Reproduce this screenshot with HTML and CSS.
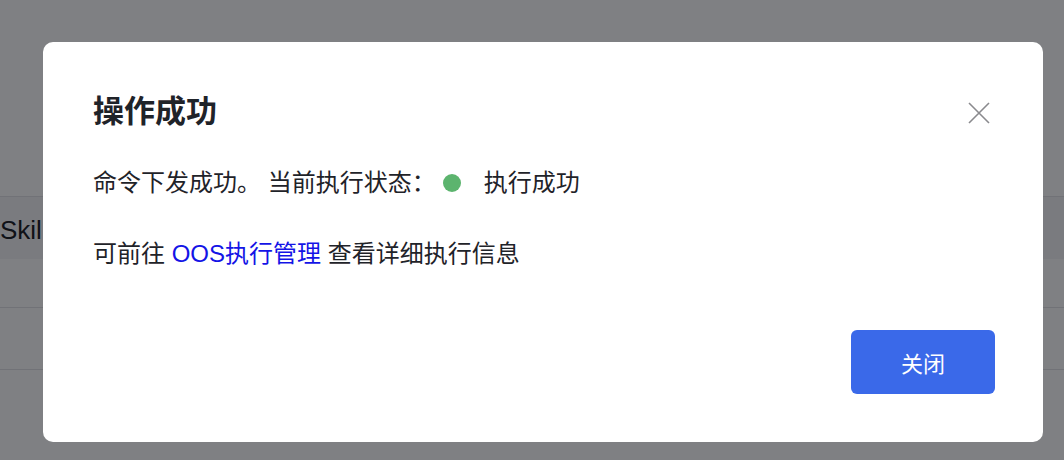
FILE: index.html
```html
<!DOCTYPE html>
<html lang="zh-CN">
<head>
    <meta charset="UTF-8">
    <meta name="viewport" content="width=device-width, initial-scale=1.0">
    <title>操作成功</title>
    <link rel="stylesheet" href="styles.css">
</head>
<body>
    <!-- Page behind the mask -->
    <div class="page">
        <div class="row row-first">
            <div class="cell">Skill</div>
        </div>
        <div class="row"></div>
        <div class="row"></div>
    </div>

    <div class="mask"></div>

    <!-- Result dialog -->
    <div class="dialog">
        <button class="dialog-close" aria-label="关闭">
            <svg width="22" height="22" viewBox="0 0 22 22">
                <path d="M1 1 L21 21 M21 1 L1 21" stroke="#8a8a8e" stroke-width="1.6" fill="none"/>
            </svg>
        </button>
        <h2 class="dialog-title">操作成功</h2>
        <div class="dialog-body">
            <p class="line">命令下发成功。 当前执行状态：<span class="status"><span class="dot"></span>执行成功</span></p>
            <p class="line line-gap">可前往 <a href="#" class="link">OOS执行管理</a> 查看详细执行信息</p>
        </div>
        <div class="dialog-footer">
            <button class="btn-primary">关闭</button>
        </div>
    </div>
</body>
</html>
```

FILE: styles.css
```css
/* Page */
body {
    margin: 0;
    width: 1064px;
    height: 460px;
    overflow: hidden;
    font-family: "Liberation Sans", "Noto Sans CJK SC", sans-serif;
    background-color: #fff;
    position: relative;
}

.page {
    padding-top: 196px;
}

.row {
    height: 61px;
    border-top: 1px solid #e2e2e6;
}

.row-first {
    height: 110px;
}

.cell {
    height: 62px;
    background-color: #f4f5f7;
    font-size: 26px;
    line-height: 66px;
    color: #1f2329;
}

/* Mask over the page */
.mask {
    position: absolute;
    inset: 0;
    background: rgba(0, 2, 8, 0.5);
}

/* Dialog */
.dialog {
    position: absolute;
    top: 42px;
    left: 43px;
    width: 1000px;
    height: 400px;
    box-sizing: border-box;
    padding: 50px 48px 48px 50px;
    background: #fff;
    border-radius: 10px;
    display: flex;
    flex-direction: column;
    color: #1f2329;
}

.dialog-close {
    position: absolute;
    top: 60px;
    right: 53px;
    width: 22px;
    height: 22px;
    padding: 0;
    border: none;
    background: none;
    cursor: pointer;
}

.dialog-close svg {
    display: block;
}

.dialog-title {
    margin: 0;
    font-size: 31px;
    line-height: 40px;
    font-weight: 700;
}

.dialog-body {
    flex: 1;
    padding-top: 35px;
}

.line {
    margin: 0;
    font-size: 24px;
    line-height: 32px;
    display: flex;
    align-items: center;
    white-space: pre;
}

.line-gap {
    margin-top: 39px;
}

.status {
    display: inline-flex;
    align-items: center;
    margin-left: 7px;
}

.dot {
    width: 18px;
    height: 18px;
    border-radius: 50%;
    background-color: #5cb46e;
    margin-right: 23px;
}

.link {
    color: #1414e6;
    text-decoration: none;
}

.dialog-footer {
    display: flex;
    justify-content: flex-end;
}

.btn-primary {
    width: 144px;
    height: 64px;
    border: none;
    border-radius: 6px;
    background-color: #3a69e9;
    color: #fff;
    font-family: inherit;
    font-size: 22px;
    cursor: pointer;
}
```
